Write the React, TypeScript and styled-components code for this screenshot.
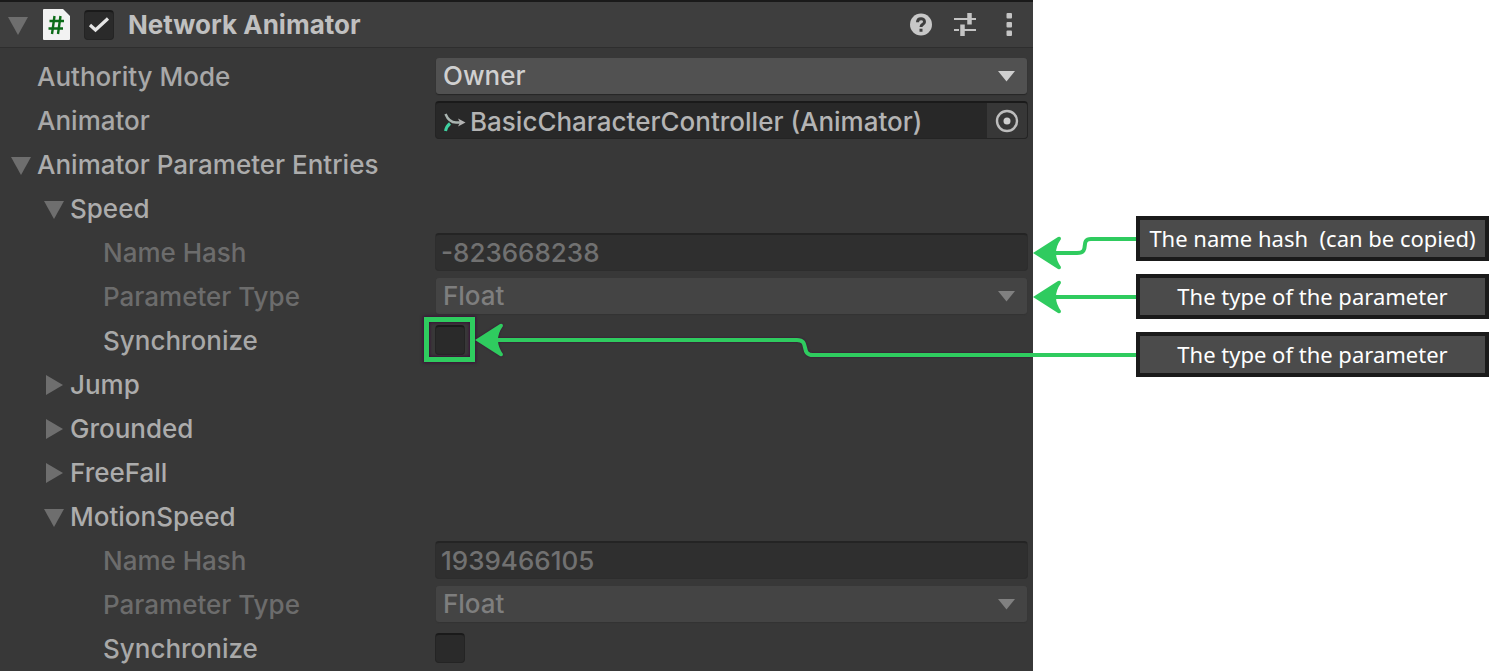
import React, { useId } from 'react';
import styled, { createGlobalStyle, css } from 'styled-components';

const GREEN = '#2fcb5f';

const GlobalStyle = createGlobalStyle`
  *, *::before, *::after { box-sizing: border-box; }
  body { margin: 0; background: #fff; }
  button, input, select { font: inherit; color: inherit; }
`;

const Page = styled.div`
  display: flex;
  min-height: 100vh;
  font-family: Inter, 'Liberation Sans', sans-serif;
  font-size: 26px;
  font-weight: 450;
  line-height: 32px;
`;

/* ---------- inspector panel ---------- */

const Panel = styled.main`
  flex: 1;
  min-width: 0;
  background: #383838;
  color: #a8a8a8;
`;

const Header = styled.header`
  display: flex;
  align-items: center;
  height: 48px;
  padding: 0 12px 0 8px;
  border-top: 2px solid #1a1a1a;
  border-bottom: 1px solid #2e2e2e;
  background: #3e3e3e;
`;

const Title = styled.label`
  flex: 1;
  margin-left: 14px;
  font-weight: 650;
  color: #c0c0c0;
  white-space: nowrap;
`;

const IconButton = styled.button`
  display: flex;
  align-items: center;
  justify-content: center;
  padding: 0;
  border: 0;
  background: none;
  color: #c4c4c4;
  cursor: pointer;
`;

const Actions = styled.div`
  display: flex;
  gap: 20px;
`;

const ScriptIcon = styled.svg`
  margin: 0 14px 0 13px;
`;

const Rows = styled.div`
  padding-top: 6px;
`;

const Row = styled.div<{ $disabled?: boolean }>`
  position: relative;
  display: grid;
  grid-template-columns: 435px minmax(0, 1fr);
  align-items: center;
  height: 44px;
  padding-right: 5px;
  color: ${(p) => (p.$disabled ? '#6c6c6c' : 'inherit')};
`;

const Label = styled.label<{ $level: number }>`
  padding-top: 2px;
  padding-left: ${(p) => 37 + p.$level * 33}px;
  white-space: nowrap;
`;

const FoldoutButton = styled.button<{ $level: number }>`
  display: flex;
  align-items: center;
  gap: 4px;
  height: 44px;
  padding: 2px 0 0 ${(p) => 11 + p.$level * 33}px;
  border: 0;
  background: none;
  color: #acacac;
  font-weight: 500;
  white-space: nowrap;
  cursor: pointer;
`;

const SelectWrap = styled.div`
  position: relative;
  margin: 0 1px;

  svg {
    position: absolute;
    top: 13px;
    right: 12px;
    pointer-events: none;
  }
`;

const Select = styled.select`
  display: block;
  appearance: none;
  width: 100%;
  height: 36px;
  padding: 0 40px 0 7px;
  border: 0;
  border-radius: 3px;
  background: #515151;
  box-shadow: 0 1px 1px #262626;
  color: #d0d0d0;
  opacity: 1;

  &:disabled {
    background: #444;
    box-shadow: 0 1px 1px #343434;
    color: #7e7e7e;
  }
`;

const sunken = css`
  border: 1px solid #242424;
  border-top: 2px solid #1a1a1a;
  border-radius: 4px;
  background: #282828;
`;

const TextInput = styled.input`
  ${sunken}
  width: 100%;
  height: 38px;
  padding: 0 5px;

  &:disabled {
    border-color: #242424 #2d2d2d #2d2d2d;
    background: #2f2f2f;
    color: #717171;
  }
`;

const ObjectField = styled.div`
  ${sunken}
  display: flex;
  align-items: center;
  gap: 3px;
  height: 38px;
  padding-left: 8px;

  input {
    flex: 1;
    min-width: 0;
    padding: 2px 0 0;
    border: 0;
    outline: 0;
    background: none;
    color: #b4b4b4;
  }
`;

const PickerButton = styled(IconButton)`
  width: 40px;
  height: 35px;
  border-radius: 0 3px 3px 0;
  background: #373737;
`;

const CheckWrap = styled.span`
  position: relative;
  display: block;
  width: 30px;
  height: 30px;

  svg {
    position: absolute;
    inset: 0;
    pointer-events: none;
    visibility: hidden;
  }
  input:checked + svg {
    visibility: visible;
  }
`;

const CheckInput = styled.input`
  ${sunken}
  display: block;
  appearance: none;
  width: 30px;
  height: 30px;
  margin: 0;
  background: #2a2a2a;
`;

/* ---------- annotations ---------- */

const Highlight = styled.div`
  position: absolute;
  top: -1px;
  left: 424px;
  width: 51px;
  height: 45px;
  border: 5px solid ${GREEN};
  box-shadow: 0 0 3px 1px #3a1038, inset 0 0 3px 1px #3a1038;
  pointer-events: none;
`;

const RowConnector = styled.div`
  position: absolute;
  top: 0;
  left: 475px;
  right: 0;
  display: flex;
  height: 44px;
  filter: drop-shadow(0 0 1px #3a1038);
  pointer-events: none;
  clip-path: inset(-4px 0 -4px 0);

  svg {
    flex: none;
  }
`;

const ConnectorLine = styled.span`
  flex: 1;
  height: 4px;
  margin-top: 35px;
  background: ${GREEN};
`;

const Gutter = styled.div`
  flex: none;
  width: 103px;
  padding-top: 216px;

  svg {
    display: block;
  }
`;

const Callouts = styled.aside`
  flex: none;
  display: flex;
  flex-direction: column;
  gap: 13px;
  width: 353px;
  padding-top: 216px;
`;

const Callout = styled.p`
  display: flex;
  align-items: center;
  justify-content: center;
  height: 45px;
  margin: 0;
  padding-bottom: 1px;
  border: 4px solid #1a1a1a;
  background: #4b4b4b;
  color: #fff;
  font-family: 'Noto Sans', 'Open Sans', sans-serif;
  font-size: 22px;
  font-weight: 400;
  line-height: 30px;
  white-space: pre;
`;

/* ---------- parts ---------- */

function Triangle({ open }: { open?: boolean }) {
  return (
    <svg width="22" height="22" viewBox="0 0 22 22" aria-hidden="true">
      <path d={open ? 'M0 3h20L10 21z' : 'M2 1v20l17-10z'} fill="#6e6e6e" />
    </svg>
  );
}

function Check({ id, checked }: { id: string; checked?: boolean }) {
  return (
    <CheckWrap>
      <CheckInput id={id} type="checkbox" defaultChecked={checked} />
      <svg width="30" height="30" viewBox="0 0 30 30" fill="none" aria-hidden="true">
        <path d="M6 15l5.500 5L24 8.500" stroke="#e4e4e4" strokeWidth="3.200" />
      </svg>
    </CheckWrap>
  );
}

function Dropdown({ id, value, disabled }: { id: string; value: string; disabled?: boolean }) {
  return (
    <SelectWrap>
      <Select id={id} defaultValue={value} disabled={disabled}>
        <option>{value}</option>
      </Select>
      <svg width="17" height="11" viewBox="0 0 17 11" aria-hidden="true">
        <path d="M0 0h17L8.500 10.500z" fill={disabled ? '#808080' : '#cfcfcf'} />
      </svg>
    </SelectWrap>
  );
}

function Foldout({ level, open, children }: { level: number; open?: boolean; children: string }) {
  return (
    <Row>
      <FoldoutButton type="button" $level={level} aria-expanded={!!open}>
        <Triangle open={open} />
        {children}
      </FoldoutButton>
    </Row>
  );
}

interface Parameter {
  name: string;
  hash?: string;
  type?: string;
  annotated?: boolean;
}

const parameters: Parameter[] = [
  { name: 'Speed', hash: '-823668238', type: 'Float', annotated: true },
  { name: 'Jump' },
  { name: 'Grounded' },
  { name: 'FreeFall' },
  { name: 'MotionSpeed', hash: '1939466105', type: 'Float' },
];

function ParameterEntry({ name, hash, type, annotated }: Parameter) {
  const id = useId();
  if (!hash || !type) return <Foldout level={1}>{name}</Foldout>;
  return (
    <>
      <Foldout level={1} open>
        {name}
      </Foldout>
      <Row $disabled>
        <Label $level={2} htmlFor={id + 'hash'}>Name Hash</Label>
        <TextInput id={id + 'hash'} defaultValue={hash} disabled />
      </Row>
      <Row $disabled>
        <Label $level={2} htmlFor={id + 'type'}>Parameter Type</Label>
        <Dropdown id={id + 'type'} value={type} disabled />
      </Row>
      <Row>
        <Label $level={2} htmlFor={id + 'sync'}>Synchronize</Label>
        <Check id={id + 'sync'} />
        {annotated && (
          <>
            <Highlight />
            <RowConnector>
              <svg width="345" height="44" viewBox="0 0 345 44" aria-hidden="true">
                <path
                  d="M20 22H322C335 22 325 37 338 37H345"
                  fill="none"
                  stroke={GREEN}
                  strokeWidth="4"
                />
                <ArrowHead x={0} y={22} />
              </svg>
              <ConnectorLine />
            </RowConnector>
          </>
        )}
      </Row>
    </>
  );
}

function ArrowHead({ x, y }: { x: number; y: number }) {
  return (
    <path
      transform={`translate(${x} ${y})`}
      d="M0 0L25 -16Q28 -17 28 -14Q18 0 28 14Q28 17 25 16Z"
      fill={GREEN}
    />
  );
}

export default function App() {
  return (
    <Page>
      <GlobalStyle />
      <Panel>
        <Header>
          <IconButton type="button" aria-label="Collapse component">
            <Triangle open />
          </IconButton>
          <ScriptIcon width="27" height="32" viewBox="0 0 27 32" aria-hidden="true">
            <path d="M1 0h19l7 7v23q0 1-1 1H1q-1 0-1-1V1q0-1 1-1z" fill="#f2f2f2" />
            <path
              d="M11.500 7L9 25M17.500 7l-2.500 18M6.500 12H21M5.500 19.500H20"
              stroke="#0b6b17"
              strokeWidth="2.400"
              fill="none"
            />
          </ScriptIcon>
          <Check id="component-enabled" checked />
          <Title htmlFor="component-enabled">Network Animator</Title>
          <Actions>
            <IconButton type="button" aria-label="Help">
              <svg width="24" height="24" viewBox="0 0 24 24" fill="none">
                <circle cx="12" cy="11.500" r="11" fill="#c8c8c8" />
                <path
                  d="M8.500 9.200C8.500 4.500 15.500 4.500 15.500 8.900C15.500 11.300 12 11.300 12 14M12 15.800v3"
                  stroke="#3e3e3e"
                  strokeWidth="3"
                />
              </svg>
            </IconButton>
            <IconButton type="button" aria-label="Presets">
              <svg width="24" height="24" viewBox="0 0 24 24" fill="none" stroke="currentColor">
                <path d="M1 6h14M18 6h5M1 17h5M11 17h12" strokeWidth="2.200" />
                <path d="M16.500 0v11.500M9.500 11.500v11.500" strokeWidth="4.500" />
              </svg>
            </IconButton>
            <IconButton type="button" aria-label="More options">
              <svg width="24" height="24" viewBox="0 0 24 24" fill="currentColor">
                <rect x="9.500" y="0" width="5.500" height="5.500" rx="1" />
                <rect x="9.500" y="9" width="5.500" height="5.500" rx="1" />
                <rect x="9.500" y="17.500" width="5.500" height="5.500" rx="1" />
              </svg>
            </IconButton>
          </Actions>
        </Header>

        <Rows>
          <Row>
            <Label $level={0} htmlFor="authority">Authority Mode</Label>
            <Dropdown id="authority" value="Owner" />
          </Row>
          <Row>
            <Label $level={0} htmlFor="animator">Animator</Label>
            <ObjectField>
              <svg width="23" height="22" viewBox="0 0 23 22" fill="none" aria-hidden="true">
                <path d="M1.500 4C4 10 7 12.500 12 12.500H18" stroke="#a9b4b0" strokeWidth="2.500" />
                <path d="M14 8.500l7.500 4-7.500 4 2-4z" fill="#b4b4b4" />
                <path d="M1.500 21C2 18 3.500 15.500 6 13.500" stroke="#3fd0a0" strokeWidth="3" />
              </svg>
              <input id="animator" defaultValue="BasicCharacterController (Animator)" readOnly />
              <PickerButton type="button" aria-label="Select object">
                <svg width="24" height="24" viewBox="0 0 24 24" fill="none">
                  <circle cx="12" cy="12" r="10" stroke="#bdbdbd" strokeWidth="2.400" />
                  <circle cx="12" cy="12" r="3.500" fill="#cfcfcf" />
                </svg>
              </PickerButton>
            </ObjectField>
          </Row>
          <Foldout level={0} open>
            Animator Parameter Entries
          </Foldout>
          {parameters.map((p) => (
            <ParameterEntry key={p.name} {...p} />
          ))}
        </Rows>
      </Panel>

      <Gutter>
        <svg width="103" height="145" viewBox="0 0 103 145" aria-hidden="true">
          <g fill="none" stroke={GREEN} strokeWidth="4">
            <path d="M20 37H44C58 37 46 23 58 23H103" />
            <path d="M20 81H103" />
            <path d="M0 139H103" />
          </g>
          <ArrowHead x={0} y={37} />
          <ArrowHead x={0} y={81} />
        </svg>
      </Gutter>

      <Callouts>
        <Callout>{'The name hash  (can be copied)'}</Callout>
        <Callout>The type of the parameter</Callout>
        <Callout>The type of the parameter</Callout>
      </Callouts>
    </Page>
  );
}
